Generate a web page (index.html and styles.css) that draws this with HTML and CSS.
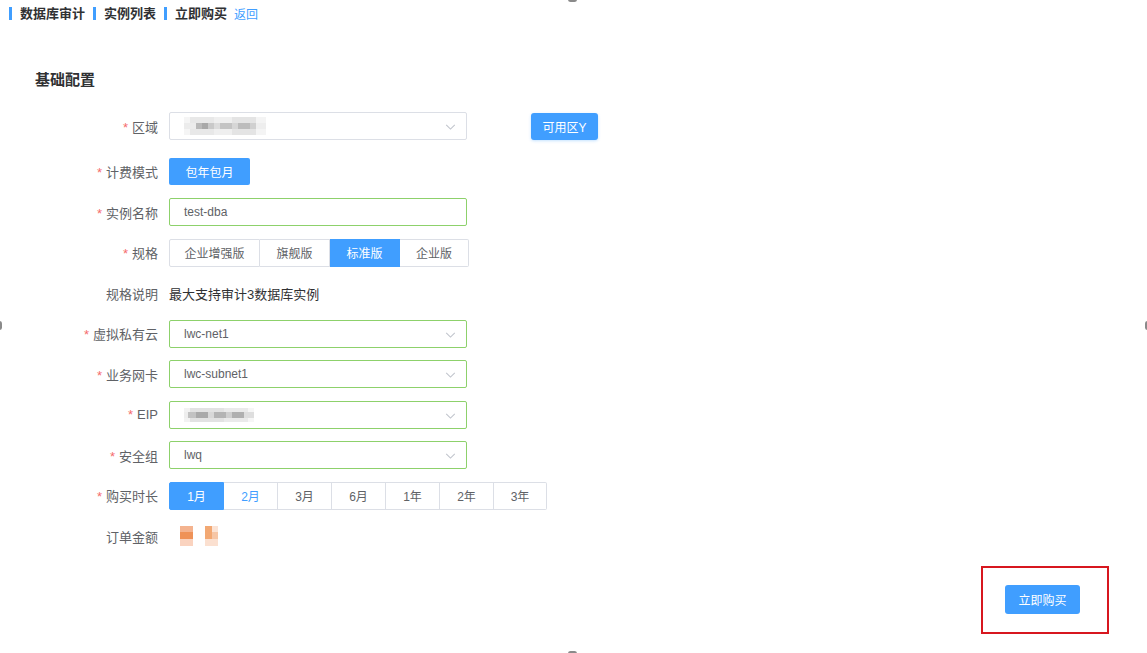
FILE: index.html
```html
<!DOCTYPE html>
<html lang="zh-CN">
<head>
  <meta charset="UTF-8" />
  <meta name="viewport" content="width=device-width, initial-scale=1.0"/>
  <title>立即购买</title>
  <link rel="stylesheet" href="styles.css">
</head>
<body>
  <div class="crumbs">
    <span class="crumb">数据库审计</span>
    <span class="crumb">实例列表</span>
    <span class="crumb">立即购买</span>
    <a class="back" href="#">返回</a>
  </div>

  <h2 class="section-title">基础配置</h2>

  <div class="form">
    <div class="row row-first">
      <label class="label"><i class="req">*</i>区域</label>
      <div class="select">
        <span class="mosaic mosaic-region"></span>
        <svg class="arrow" viewBox="0 0 12 7"><path d="M1 1l5 5 5-5"/></svg>
      </div>
      <button class="btn zone-btn">可用区Y</button>
    </div>

    <div class="row">
      <label class="label"><i class="req">*</i>计费模式</label>
      <button class="btn pay-btn">包年包月</button>
    </div>

    <div class="row">
      <label class="label"><i class="req">*</i>实例名称</label>
      <div class="select ok"><span class="value">test-dba</span></div>
    </div>

    <div class="row">
      <label class="label"><i class="req">*</i>规格</label>
      <div class="radio-group">
        <span class="radio w91">企业增强版</span>
        <span class="radio w70">旗舰版</span>
        <span class="radio w70 active">标准版</span>
        <span class="radio w69">企业版</span>
      </div>
    </div>

    <div class="row">
      <label class="label">规格说明</label>
      <span class="plain">最大支持审计3数据库实例</span>
    </div>

    <div class="row">
      <label class="label"><i class="req">*</i>虚拟私有云</label>
      <div class="select ok">
        <span class="value">lwc-net1</span>
        <svg class="arrow" viewBox="0 0 12 7"><path d="M1 1l5 5 5-5"/></svg>
      </div>
    </div>

    <div class="row">
      <label class="label"><i class="req">*</i>业务网卡</label>
      <div class="select ok">
        <span class="value">lwc-subnet1</span>
        <svg class="arrow" viewBox="0 0 12 7"><path d="M1 1l5 5 5-5"/></svg>
      </div>
    </div>

    <div class="row">
      <label class="label"><i class="req">*</i>EIP</label>
      <div class="select ok">
        <span class="mosaic mosaic-eip"></span>
        <svg class="arrow" viewBox="0 0 12 7"><path d="M1 1l5 5 5-5"/></svg>
      </div>
    </div>

    <div class="row">
      <label class="label"><i class="req">*</i>安全组</label>
      <div class="select ok">
        <span class="value">lwq</span>
        <svg class="arrow" viewBox="0 0 12 7"><path d="M1 1l5 5 5-5"/></svg>
      </div>
    </div>

    <div class="row">
      <label class="label"><i class="req">*</i>购买时长</label>
      <div class="radio-group">
        <span class="radio w55 active">1月</span>
        <span class="radio w54 hover">2月</span>
        <span class="radio w54">3月</span>
        <span class="radio w54">6月</span>
        <span class="radio w54">1年</span>
        <span class="radio w54">2年</span>
        <span class="radio w53">3年</span>
      </div>
    </div>

    <div class="row">
      <label class="label">订单金额</label>
      <span class="price">
        <span class="mosaic mosaic-price"></span>
        <span class="mosaic mosaic-price2"></span>
      </span>
    </div>
  </div>

  <div class="footer">
    <div class="highlight">
      <button class="btn buy-btn">立即购买</button>
    </div>
  </div>

  <span class="handle handle-top"></span>
  <span class="handle handle-bottom"></span>
  <span class="handle handle-left"></span>
  <span class="handle handle-right"></span>
</body>
</html>
```

FILE: styles.css
```css
* {
  box-sizing: border-box;
}

body {
  margin: 0;
  background: #fff;
  font-family: "Liberation Sans", "Noto Sans CJK SC", sans-serif;
  color: #606266;
  font-size: 13px;
  height: 653px;
  overflow: hidden;
  position: relative;
}

.crumbs {
  display: flex;
  align-items: center;
  padding: 5px 0 0 9px;
  height: 21px;
}

.crumb {
  border-left: 3px solid #409eff;
  padding-left: 8px;
  margin-right: 8px;
  font-size: 13px;
  font-weight: bold;
  color: #303133;
  line-height: 13px;
}

.back {
  color: #409eff;
  font-size: 12px;
  text-decoration: none;
  margin-left: -1px;
}

.section-title {
  margin: 50px 0 0 35px;
  font-size: 15px;
  font-weight: bold;
  color: #303133;
  line-height: 17px;
}

.form {
  margin-top: 24px;
}

.row {
  display: flex;
  align-items: center;
  height: 28px;
  margin-bottom: 12.5px;
}

.row-first {
  margin-bottom: 17.5px;
}

.label {
  width: 169px;
  padding-right: 11px;
  text-align: right;
  flex-shrink: 0;
  color: #606266;
}

.req {
  font-style: normal;
  color: #f56c6c;
  margin-right: 4px;
}

.select {
  width: 298px;
  height: 28px;
  border: 1px solid #dcdfe6;
  border-radius: 2px;
  display: flex;
  align-items: center;
  padding-left: 14px;
  position: relative;
  background: #fff;
}

.select.ok {
  border-color: #8dd16b;
}

.value {
  font-size: 12px;
  color: #606266;
}

.arrow {
  position: absolute;
  right: 10px;
  top: 11px;
  width: 11px;
  height: 6px;
  fill: none;
  stroke: #c0c4cc;
  stroke-width: 1.2;
}

.btn {
  border: none;
  border-radius: 3px;
  background: #409eff;
  color: #fff;
  font-family: inherit;
  font-size: 12px;
  height: 27px;
  cursor: pointer;
}

.zone-btn {
  margin-left: 64px;
  width: 67px;
  box-shadow: 0 1px 3px rgba(64, 158, 255, 0.3);
}

.pay-btn {
  width: 81px;
  height: 27px;
  border-radius: 2px;
}

.radio-group {
  display: flex;
  height: 28px;
}

.radio {
  height: 28px;
  display: flex;
  align-items: center;
  justify-content: center;
  font-size: 12px;
  color: #606266;
  border: 1px solid #dcdfe6;
  border-left: none;
  background: #fff;
}

.radio:first-child {
  border-left: 1px solid #dcdfe6;
  border-radius: 2px 0 0 2px;
}

.radio:last-child {
  border-radius: 0 2px 2px 0;
}

.radio.active {
  background: #409eff;
  border-color: #409eff;
  color: #fff;
}

.radio.hover {
  color: #409eff;
}

.w91 { width: 91px; }
.w70 { width: 70px; }
.w69 { width: 69px; }
.w55 { width: 55px; }
.w54 { width: 54px; }
.w53 { width: 53px; }

.plain {
  font-size: 13px;
  color: #303133;
}

.mosaic {
  display: block;
}

.mosaic-region {
  width: 82px;
  height: 18px;
  background:
    linear-gradient(to right, #ececec 0 12px, #b9b9b9 12px 18px, #a8a8a8 18px 24px, #c9c9c9 24px 30px,
      #dcdcdc 30px 36px, #c4c4c4 36px 48px, #d6d6d6 48px 54px, #bcbcbc 54px 66px, #d0d0d0 66px 72px, #eeeeee 72px 82px) center / 100% 6px no-repeat,
    linear-gradient(to right, #f5f5f5 0 6px, #e8e8e8 6px 30px, #efefef 30px 48px, #e4e4e4 48px 72px, #f4f4f4 72px 82px);
}

.mosaic-eip {
  width: 70px;
  height: 14px;
  background:
    linear-gradient(to right, #eeeeee 0 4px, #c2c2c2 4px 12px, #a9a9a9 12px 24px, #d8d8d8 24px 30px,
      #b4b4b4 30px 42px, #cfcfcf 42px 48px, #b0b0b0 48px 60px, #dedede 60px 70px) center / 100% 6px no-repeat,
    linear-gradient(to right, #f2f2f2 0 6px, #e2e2e2 6px 40px, #eaeaea 40px 64px, #f6f6f6 64px 70px);
}

.price {
  display: flex;
  align-items: center;
  gap: 12px;
  margin-left: 11px;
}

.mosaic-price {
  width: 13px;
  height: 20px;
  background: linear-gradient(to bottom, #f4b38f 0 6px, #ef9258 6px 13px, #fad3bf 13px 20px);
}

.mosaic-price2 {
  width: 13px;
  height: 20px;
  background:
    linear-gradient(to right, #f2a873 0 7px, transparent 7px) top / 100% 13px no-repeat,
    linear-gradient(to bottom, #fbe3d5 0 6px, #f6c6a6 6px 13px, #fbe0d0 13px 20px);
}

.footer {
  display: flex;
  justify-content: flex-end;
  padding-right: 38px;
  margin-top: 15.5px;
}

.highlight {
  width: 128px;
  height: 68px;
  border: 2px solid #d7171f;
  display: flex;
  align-items: center;
  justify-content: center;
}

.buy-btn {
  width: 75px;
  height: 29px;
  margin-left: -5px;
}

.handle {
  position: absolute;
  background: #8a8a8a;
  border-radius: 4px;
}

.handle-top {
  left: 568px;
  top: -3px;
  width: 9px;
  height: 5px;
}

.handle-bottom {
  left: 568px;
  bottom: -3px;
  width: 9px;
  height: 5px;
}

.handle-left {
  left: -3px;
  top: 321px;
  width: 5px;
  height: 9px;
}

.handle-right {
  right: -3px;
  top: 321px;
  width: 5px;
  height: 9px;
}
```
